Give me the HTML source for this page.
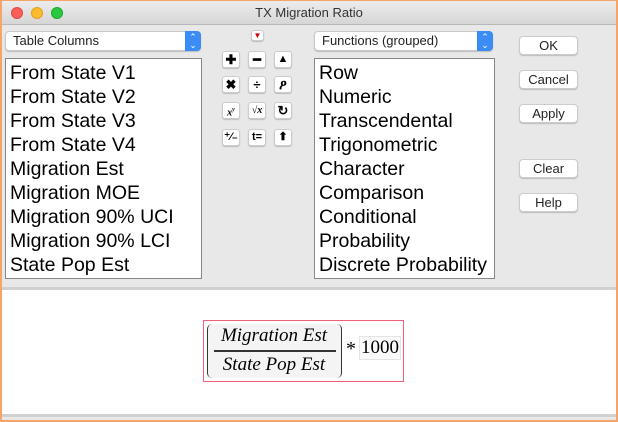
<!DOCTYPE html>
<html><head><style>
*{box-sizing:border-box;margin:0;padding:0}
body{width:618px;height:422px;overflow:hidden;background:#fff;font-family:"Liberation Sans",sans-serif;position:relative}
.win{position:absolute;left:0;top:0;width:618px;height:422px;border:2px solid #f5a56a;border-top:1px solid #f5a56a;background:#e8e8e8}
.title{position:absolute;left:0;top:0;width:614px;height:24px;background:linear-gradient(#ececec,#d6d6d6);border-bottom:1px solid #b8b8b8;text-align:center;font-size:13px;line-height:24px;color:#333}
.dot{position:absolute;top:6px;width:12px;height:12px;border-radius:50%}
.sel{position:absolute;height:20px;background:#fff;border:1px solid #c8c8c8;border-radius:4px;font-size:13px;line-height:18px;padding-left:7px;color:#222;box-shadow:0 1px 1px #bbb}
.sel .ar{position:absolute;right:-1px;top:-1px;width:16px;height:20px;background:#3b8cf5;border-radius:0 4px 4px 0;color:#fff;font-size:9px;line-height:8px;text-align:center;padding-top:2px}
.list{position:absolute;background:#fff;border:1px solid #888;font-size:19.5px;line-height:24px;padding:2px 0 0 4px;color:#000;white-space:nowrap;overflow:hidden}
.btn{position:absolute;left:517px;width:59px;height:19px;background:#fff;border:1px solid #ccc;border-radius:4px;font-size:13px;text-align:center;line-height:17px;box-shadow:0 1px 1px #bbb;color:#222}
.tb{position:absolute;width:18px;height:17px;background:#fff;border:1px solid #ccc;border-radius:3px;font-size:13px;font-weight:bold;text-align:center;line-height:15px;box-shadow:0 1px 1px #bbb}
.bottom{position:absolute;left:0;top:286px;width:614px;height:130px;background:#fff;border-top:3px solid #d0d0d0;border-bottom:3px solid #d0d0d0}
</style></head><body>
<div class="win">
<div class="title">TX Migration Ratio
<div class="dot" style="left:9px;background:#fc5f57;border:1px solid #de4a42"></div>
<div class="dot" style="left:29px;background:#fdbc2e;border:1px solid #dea023"></div>
<div class="dot" style="left:49px;background:#28c840;border:1px solid #1aab29"></div>
</div>
<div class="sel" style="left:3px;top:30px;width:196px">Table Columns<div class="ar">⌃<br>⌄</div></div>
<div class="list" style="left:3px;top:57px;width:197px;height:221px">From State V1<br>From State V2<br>From State V3<br>From State V4<br>Migration Est<br>Migration MOE<br>Migration 90% UCI<br>Migration 90% LCI<br>State Pop Est</div>
<div class="tb" style="left:249px;top:29px;width:13px;height:11px;line-height:9px;font-size:8px;color:#c00">▼</div>
<div class="tb" style="left:220px;top:50px">✚</div>
<div class="tb" style="left:246px;top:50px">━</div>
<div class="tb" style="left:272px;top:50px;font-size:11px">▲</div>
<div class="tb" style="left:220px;top:75px">✖</div>
<div class="tb" style="left:246px;top:75px">÷</div>
<div class="tb" style="left:272px;top:75px">ዖ</div>
<div class="tb" style="left:220px;top:101px;font-family:'Liberation Serif';font-style:italic;font-size:10px">x<sup style="font-size:6px">y</sup></div>
<div class="tb" style="left:246px;top:101px;font-family:'Liberation Serif';font-style:italic;font-size:10px">√x</div>
<div class="tb" style="left:272px;top:101px">↻</div>
<div class="tb" style="left:220px;top:128px;font-size:11px">⁺⁄₋</div>
<div class="tb" style="left:246px;top:128px;font-size:11px">t=</div>
<div class="tb" style="left:272px;top:128px;font-size:11px">⬆</div>
<div class="sel" style="left:312px;top:30px;width:179px">Functions (grouped)<div class="ar">⌃<br>⌄</div></div>
<div class="list" style="left:312px;top:57px;width:181px;height:221px">Row<br>Numeric<br>Transcendental<br>Trigonometric<br>Character<br>Comparison<br>Conditional<br>Probability<br>Discrete Probability</div>
<div class="btn" style="top:35px">OK</div>
<div class="btn" style="top:69px">Cancel</div>
<div class="btn" style="top:103px">Apply</div>
<div class="btn" style="top:158px">Clear</div>
<div class="btn" style="top:192px">Help</div>
<div class="bottom">
<div style="position:absolute;left:201px;top:30px;width:201px;height:62px;border:1px solid #f0607a;font-family:'Liberation Serif',serif;">
<div style="position:absolute;left:3px;top:3px;width:135px;height:54px;border:1.5px solid #333;border-top:none;border-bottom:none;border-radius:5px;background:#f4f4f4"></div>
<div style="position:absolute;left:10px;top:4px;width:120px;font-style:italic;font-size:19px;text-align:center;line-height:22px">Migration Est</div>
<div style="position:absolute;left:10px;top:29px;width:122px;height:2px;background:#333"></div>
<div style="position:absolute;left:10px;top:33px;width:120px;font-style:italic;font-size:19px;text-align:center;line-height:22px">State Pop Est</div>
<div style="position:absolute;left:142px;top:17px;font-size:20px">*</div>
<div style="position:absolute;left:155px;top:15px;font-size:19px;background:#fafafa;border:1px solid #e4e4e4;padding:0 1px">1000</div>
</div>
</div>
</div>
</body></html>
